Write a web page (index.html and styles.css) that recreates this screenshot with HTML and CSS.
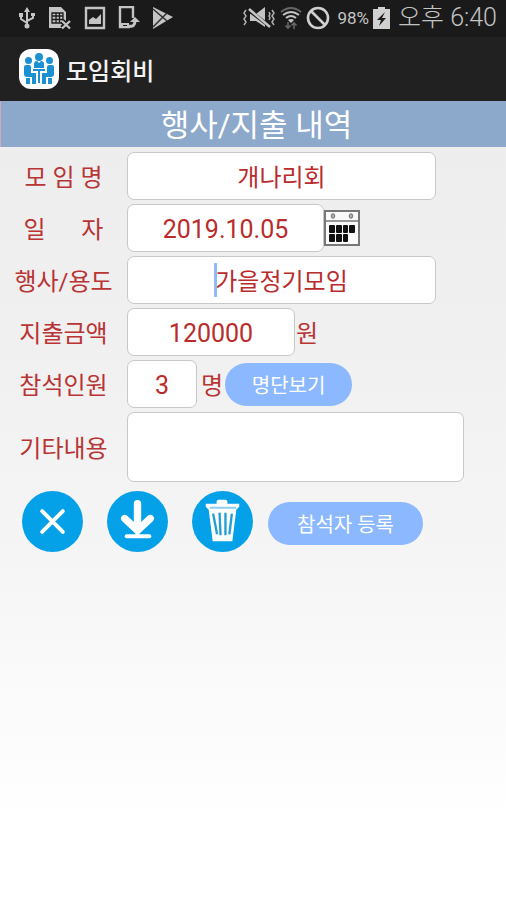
FILE: index.html
```html
<!DOCTYPE html>
<html lang="ko">
<head>
<meta charset="utf-8">
<meta name="viewport" content="width=device-width, initial-scale=1">
<title>모임회비</title>
<link rel="stylesheet" href="styles.css">
</head>
<body>
<div class="status">
  <div class="status-left">
    <svg width="18" height="24" viewBox="0 0 18 24" fill="none" stroke="#c4c4c4" stroke-width="2"><path d="M9 5v15M3 10v3l6 4M15 9v3l-6 3"/><path d="M9 1l3 5H6zM6.500 20a2.500 2.500 0 1 0 5 0 2.500 2.500 0 1 0-5 0M1 7h4v4H1zM13 7h4v3h-4z" fill="#c4c4c4" stroke="none"/></svg>
    <svg width="24" height="24" viewBox="0 0 24 24"><path d="M1 1h12l5 5v9l-3-1v8H1z" fill="#c4c4c4"/><path d="M4 7h11v10H4zM4 10h11M4 13.500h11M8 7v10M11.500 7v10" fill="none" stroke="#1c1c1c" stroke-width="1.300"/><path d="M14 15l8 7M22 15l-8 7" stroke="#1c1c1c" stroke-width="5"/><path d="M14 15l8 7.500M22 15l-8 7.500" stroke="#c4c4c4" stroke-width="2.300"/></svg>
    <svg width="22" height="24" viewBox="0 0 22 24"><path d="M2 2h18v20H2z" fill="none" stroke="#c4c4c4" stroke-width="2.400"/><path d="M5 18v-4l4-3 3 2 5-5v10z" fill="#c4c4c4"/></svg>
    <svg width="22" height="24" viewBox="0 0 22 24"><path d="M15 12V1H2v20h10" fill="none" stroke="#c4c4c4" stroke-width="2.400"/><path d="M2 17h9v5H2z" fill="#c4c4c4"/><path d="M5 19.500h4" stroke="#1c1c1c"/><path d="M11 20c4 1 6-1 6-5" fill="none" stroke="#c4c4c4" stroke-width="3"/><path d="M12 16l5-5 5 5z" fill="#c4c4c4"/></svg>
    <svg width="22" height="24" viewBox="0 0 22 24"><path d="M1 1l20 10L1 23z" fill="#c4c4c4"/><path d="M1 3l14 12M1 21L15 7" stroke="#303030" stroke-width="1.500"/></svg>
  </div>
  <div class="status-right">
    <svg width="34" height="24" viewBox="0 0 34 24"><path d="M8 8h6l9-7v20l-9-6H8z" fill="#c4c4c4"/><path d="M5 3l25 19" stroke="#1c1c1c" stroke-width="3.500"/><path d="M7 3l21 18" stroke="#c4c4c4" stroke-width="2.500"/><path d="M4 4L2 7l2 3-2 3 2 3-2 3M30 4l2 3-2 3 2 3-2 3 2 3M27 6l1 2-1 2 1 2-1 2" fill="none" stroke="#b0b0b0" stroke-width="1.500"/></svg>
    <svg width="22" height="24" viewBox="0 0 22 24" fill="none" stroke-width="2"><path d="M1 6q10-8 20 0" stroke="#666"/><path d="M3 9q8-6 16 0M6 12q5-4 10 0" stroke="#c4c4c4"/><path d="M8 14q3-2 6 0l-3 3z" fill="#c4c4c4"/><path d="M8 16v6M5.500 19.500L8 22l2.500-2.500M14 23v-6M11.500 19.500L14 17l2.500 2.500" stroke="#666" stroke-width="1.600"/></svg>
    <svg class="block" width="24" height="24" viewBox="0 0 24 24"><circle cx="12" cy="12" r="10" fill="none" stroke="#d0d0d0" stroke-width="2.600"/><path d="M5 5l14 14" stroke="#d0d0d0" stroke-width="2.600"/></svg>
    <span class="percent">98%</span>
    <svg width="17" height="24" viewBox="0 0 17 24"><path d="M0 3h5V1h7v2h5v20H0z" fill="#d0d0d0"/><path d="M12 6l-8 8h4l-2 6 7-8H9z" fill="#1c1c1c"/></svg>
    <span class="clock">오후 6:40</span>
  </div>
</div>
<header class="appbar">
  <svg width="42" height="42" viewBox="0 0 42 42"><rect x="1" y="1" width="40" height="40" rx="12" fill="#fff"/><g fill="#1b91d4"><circle cx="21" cy="9" r="4"/><circle cx="10.500" cy="12.500" r="3.500"/><circle cx="31.500" cy="12.500" r="3.500"/><path d="M16 20v-4q0-3 3-3l2 2 2-2q3 0 3 3v4zM6 19q0-2 2-2h3q2 0 2 2v6h5v11h-4v-7H9q-3 0-3-3zM36 19q0-2-2-2h-3q-2 0-2 2v6h-5v11h4v-7h5q3 0 3-3z"/><path d="M15 21h12v2h-5v12h-2V23h-5zM8 30h4v6H8zM30 30h4v6h-4z"/></g></svg>
  <span>모임회비</span>
</header>
<main>
  <h1>행사/지출 내역</h1>
  <form>
    <div class="row"><label for="club">모 임 명</label><input id="club" class="wide" type="text" value="개나리회"></div>
    <div class="row"><label for="date">일      자</label><input id="date" class="number date" type="text" value="2019.10.05"><button type="button" aria-label="달력"><svg width="36" height="36" viewBox="0 0 36 36"><rect x="1" y="1" width="34" height="34" fill="#fafafa" stroke="#777" stroke-width="2"/><path d="M1 11h34" stroke="#777" stroke-width="1.500"/><g fill="#aaa" stroke="#777"><ellipse cx="9" cy="6" rx="1.800" ry="2.300"/><ellipse cx="27" cy="6" rx="1.800" ry="2.300"/></g><g fill="#111"><rect x="5" y="15" width="6" height="8" rx="1"/><rect x="12" y="15" width="6" height="8" rx="1"/><rect x="19" y="15" width="5" height="8" rx="1"/><rect x="25" y="15" width="6" height="8" rx="1"/><rect x="5" y="24" width="6" height="8" rx="1"/><rect x="12" y="24" width="6" height="8" rx="1"/><rect x="19" y="24" width="5" height="8" rx="1"/></g></svg></button></div>
    <div class="row"><label for="event">행사/용도</label><div class="wide editing"><input id="event" type="text" value="가을정기모임"><span class="caret"></span></div></div>
    <div class="row"><label for="amount">지출금액</label><input id="amount" class="number amount" type="text" value="120000"><span class="unit">원</span></div>
    <div class="row"><label for="count">참석인원</label><input id="count" class="number count" type="text" value="3"><span class="unit people">명</span><button type="button" class="pill">명단보기</button></div>
    <div class="row"><label for="memo">기타내용</label><textarea id="memo"></textarea></div>
    <div class="actions">
      <button type="button" class="round" aria-label="닫기"><svg viewBox="0 0 62 62"><circle cx="31" cy="31" r="31" fill="#05a1e8"/><path d="M20.500 20.500l21 21M41.500 20.500l-21 21" stroke="#fff" stroke-width="4" stroke-linecap="round"/></svg></button>
      <button type="button" class="round" aria-label="저장"><svg viewBox="0 0 62 62"><circle cx="31" cy="31" r="31" fill="#05a1e8"/><path d="M31 13v26M18 28l13 12 13-12" fill="none" stroke="#fff" stroke-width="7.500" stroke-linecap="round"/><path d="M22 32h18l-9 14z" fill="#fff"/><path d="M20 46h23" stroke="#fff" stroke-width="4" stroke-linecap="round"/></svg></button>
      <button type="button" class="round" aria-label="삭제"><svg viewBox="0 0 62 62"><circle cx="31" cy="31" r="31" fill="#05a1e8"/><path d="M14 13h11v-2q0-2 2-2h7q2 0 2 2v2h12v3l-3 3-4 32H21l-4-32-3-3z" fill="#fff"/><path d="M18 17h27" stroke="#8bcfec" stroke-width="2"/><path d="M21.500 23l4 21M28 22l1 23M34 22v23M40.500 23l-2.500 21" fill="none" stroke="#239fd5" stroke-width="2.400"/></svg></button>
      <button type="button" class="pill register">참석자 등록</button>
    </div>
  </form>
</main>
</body>
</html>
```
FILE: styles.css
```css
* {
  box-sizing: border-box;
}

body {
  margin: 0;
  min-height: 100vh;
  display: flex;
  flex-direction: column;
  background: #212121;
  font-family: Roboto, "Noto Sans CJK KR", sans-serif;
}

svg {
  display: block;
  flex: none;
}

button {
  padding: 0;
  border: 0;
  background: none;
  font-family: inherit;
  flex: none;
}

.status {
  height: 37px;
  padding: 0 9px 2px 18px;
  display: flex;
  align-items: center;
  justify-content: space-between;
  background: #1a1a1a;
  color: #c4c4c4;
}

.status-left {
  display: flex;
  align-items: center;
  gap: 12px;
}

.status-right {
  display: flex;
  align-items: center;
  gap: 4px;
  white-space: nowrap;
}

.block {
  margin-right: 3px;
}

.percent {
  font-size: 17px;
}

.clock {
  margin-left: 4px;
  font-size: 25px;
  font-weight: 300;
  line-height: 32px;
}

.appbar {
  height: 64px;
  padding: 0 18px;
  display: flex;
  align-items: center;
  gap: 6px;
  color: #f2f2f2;
  font-size: 24px;
  font-weight: 500;
}

main {
  flex: 1;
  background: linear-gradient(#ededed, #f0f0f0 30%, #f5f5f5 56%, #ffffff 90%);
}

h1 {
  margin: 0;
  height: 46px;
  padding-left: 6px;
  border-left: 1px solid #c9a9bd;
  background: #8ca8ca;
  color: #fff;
  font-size: 31px;
  font-weight: 400;
  line-height: 50px;
  text-align: center;
}

form {
  padding-top: 5px;
  display: flex;
  flex-direction: column;
  gap: 4px;
  color: #b93434;
  font-size: 24px;
}

.row {
  display: flex;
  align-items: center;
}

label {
  width: 127px;
  padding-bottom: 2px;
  flex: none;
  text-align: center;
  white-space: pre;
}

input,
textarea {
  display: block;
  height: 48px;
  margin: 0;
  padding: 0 0 2px;
  border: 1px solid #c8c8c8;
  border-radius: 7px;
  background: #fff;
  color: #b92c2c;
  font-family: inherit;
  font-size: 24px;
  text-align: center;
  outline: none;
}

.number {
  padding: 2px 0 0;
  font-size: 25px;
}

.wide {
  width: 309px;
}

.editing {
  position: relative;
}

.editing input {
  width: 100%;
}

.caret {
  position: absolute;
  top: 7px;
  left: calc(50% - 68px);
  width: 3px;
  height: 34px;
  background: #92baf8;
}

.date {
  width: 197px;
}

.amount {
  width: 168px;
}

.count {
  width: 70px;
}

textarea {
  width: 337px;
  height: 70px;
  resize: none;
}

.unit {
  margin-left: 1px;
  padding-bottom: 2px;
}

.people {
  margin: 0 2px 0 4px;
}

.pill {
  width: 127px;
  height: 43px;
  border-radius: 22px;
  background: #8bb8ff;
  color: #fff;
  font-size: 20px;
}

.actions {
  margin-top: 5px;
  padding-left: 22px;
  display: flex;
  align-items: center;
  gap: 24px;
}

.round,
.round svg {
  width: 61px;
  height: 61px;
}

.register {
  width: 155px;
  margin-top: 4px;
  margin-left: -9px;
}
```
